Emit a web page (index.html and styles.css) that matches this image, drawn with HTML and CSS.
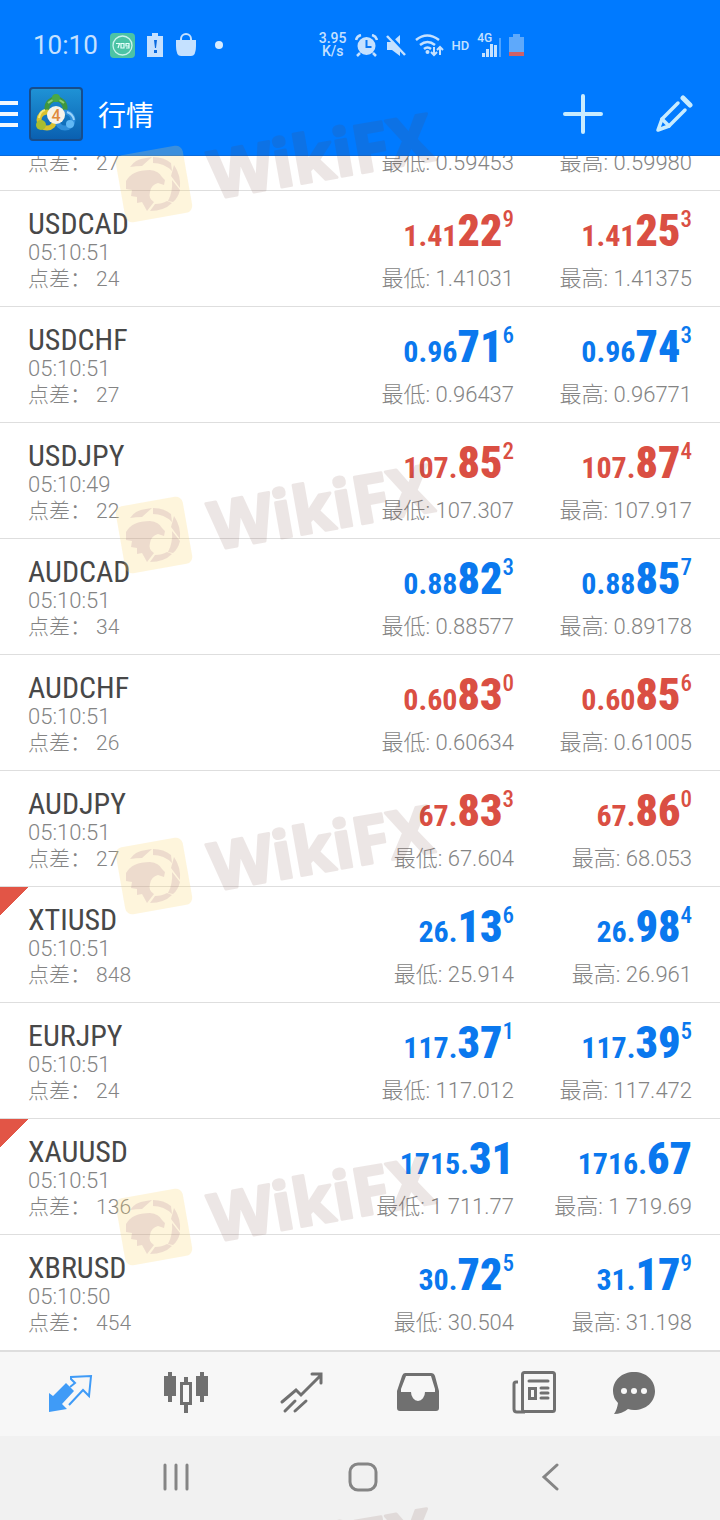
FILE: index.html
```html
<!DOCTYPE html>
<html lang="zh-CN">
<head>
    <meta charset="UTF-8">
    <meta name="viewport" content="width=device-width, initial-scale=1.0">
    <title>行情</title>
    <link rel="stylesheet" href="styles.css">
</head>
<body>
    <header>
        <div class="status-bar">
            <div class="status-group">
                <span class="clock">10:10</span>
                <svg width="25" height="25" viewBox="0 0 25 25">
                    <rect width="25" height="25" rx="4" fill="#4cc3a5"/>
                    <circle cx="12.500" cy="12.500" r="9.500" fill="none" stroke="#c9f3ee" stroke-width="1.300"/>
                    <path d="M6 10.500h3.500l-1.500 4.500M11 10.500h3v4.500h-3zM16 15h3v-4.500h-3v2.500h3" fill="none" stroke="#e6fffb" stroke-width="1.200"/>
                </svg>
                <svg width="16" height="24" viewBox="0 0 16 24">
                    <path d="M5 0h6v3h5v21H0V3h5z" fill="#c5e1ff"/>
                    <path d="M7 7h3l-1 8H8zM7 17h3v3H7z" fill="#0a6be0"/>
                </svg>
                <svg width="22" height="24" viewBox="0 0 22 24">
                    <path d="M6 9V6a5 5 0 0 1 10 0v3" fill="none" stroke="#c5e1ff" stroke-width="2"/>
                    <path d="M1 7h20v6q0 10-5 10H6q-5 0-5-10z" fill="#c5e1ff"/>
                </svg>
                <span class="dot"></span>
            </div>
            <div class="status-group status-right">
                <span class="speed"><span>3.95</span><span>K/s</span></span>
                <svg width="23" height="23" viewBox="0 0 23 23" fill="none" stroke="#c5e1ff">
                    <circle cx="11.500" cy="12" r="9" fill="#c5e1ff" stroke="none"/>
                    <path d="M11.500 6v7h5" stroke="#0a78f5" stroke-width="2"/>
                    <path d="M1 6q1-4 5-5M22 6q-1-4-5-5M5 19l-3 3M18 19l3 3" stroke-width="2.500"/>
                </svg>
                <svg width="21" height="23" viewBox="0 0 21 23">
                    <path d="M1 8h5l8-7v21l-8-6H1z" fill="#c5e1ff"/>
                    <path d="M2 0l19 20" stroke="#007aff" stroke-width="3"/>
                    <path d="M1 2l18 19" stroke="#c5e1ff" stroke-width="2.500"/>
                </svg>
                <svg width="29" height="23" viewBox="0 0 29 23" fill="none" stroke="#c5e1ff" stroke-width="2.500">
                    <path d="M1 6q11-9 23 0M5 11q7.500-6 15 0M9 15q3.500-3 7 0"/>
                    <circle cx="12.500" cy="18" r="2" fill="#c5e1ff" stroke="none"/>
                    <path d="M19 13v7M16 18l3 3 3-3M25 21v-7M22 16l3-3 3 3" stroke-width="2"/>
                </svg>
                <span class="hd">HD</span>
                <span class="signal">
                    <span class="net">4G</span>
                    <svg width="19" height="19" viewBox="0 0 19 19" fill="#c5e1ff">
                        <path d="M0 15h3v4H0zM4 11h3v8H4zM8 6h3v13H8zM12 7h3v12h-3z"/>
                        <path d="M17 0h2v19h-2z" opacity=".4"/>
                    </svg>
                </span>
                <svg width="15" height="22" viewBox="0 0 15 22">
                    <path d="M4 0h7v3h4v16H0V3h4z" fill="#5ea9fb"/>
                    <path d="M0 18h15v4H0z" fill="#cf6168"/>
                </svg>
            </div>
        </div>
        <div class="toolbar">
            <button class="icon-btn" aria-label="菜单">
                <svg width="18" height="26" viewBox="0 0 18 26" fill="#f0f8ff"><path d="M0 0h18v4H0zM0 11h18v4H0zM0 22h18v4H0z"/></svg>
            </button>
            <svg class="app-icon" width="54" height="54" viewBox="0 0 54 54">
                <defs>
                    <linearGradient id="tile" x1="0" y1="0" x2="0" y2="1"><stop offset="0" stop-color="#1f93d6"/><stop offset="1" stop-color="#0a5fb0"/></linearGradient>
                </defs>
                <rect x="1" y="1" width="52" height="52" rx="3" fill="url(#tile)" stroke="#174d8c" stroke-width="2"/>
                <g fill="none" stroke-width="5">
                    <circle cx="27" cy="21" r="9" stroke="#3e9640"/>
                    <circle cx="18" cy="33" r="8" stroke="#d8c12e"/>
                    <circle cx="36" cy="33" r="8" stroke="#2f8edb"/>
                </g>
                <path d="M19 16q8-7 16 0" fill="none" stroke="#8bcf72" stroke-width="2"/>
                <path d="M10 31q1-7 6-8" fill="none" stroke="#f6e878" stroke-width="2"/>
                <path d="M38 25q6 2 7 8" fill="none" stroke="#9ad4fa" stroke-width="2"/>
                <circle cx="27" cy="11" r="4" fill="#49a845"/>
                <circle cx="12" cy="38" r="5" fill="#a8bd30"/>
                <circle cx="41" cy="37" r="4" fill="#61b8f5"/>
                <circle cx="27" cy="28" r="9" fill="#f7f3ea"/>
                <text x="27" y="34" class="app-digit">4</text>
            </svg>
            <h1>行情</h1>
            <button class="icon-btn" aria-label="添加">
                <svg width="40" height="40" viewBox="0 0 40 40"><path d="M20 2v36M2 20h36" stroke="#c8ecff" stroke-width="4" stroke-linecap="round"/></svg>
            </button>
            <button class="icon-btn" aria-label="编辑">
                <svg width="38" height="38" viewBox="0 0 38 38" fill="none" stroke="#c8ecff" stroke-width="3.500" stroke-linecap="round" stroke-linejoin="round">
                    <path d="M23 8L7 24L3 35L14 31L30 15"/>
                    <path d="M7 24l7 7"/>
                    <path d="M28 3l7 7" stroke-width="5"/>
                </svg>
            </button>
        </div>
    </header>

    <main>
        <section class="quote">
            <div class="info"><p class="spread">点差： 27</p></div>
            <div class="side"><p>最低: 0.59453</p></div>
            <div class="side"><p>最高: 0.59980</p></div>
        </section>
        <section class="quote down">
            <div class="info"><h2>USDCAD</h2><p>05:10:51</p><p class="spread">点差： 24</p></div>
            <div class="side"><div class="price">1.41<b>22</b><sup>9</sup></div><p>最低: 1.41031</p></div>
            <div class="side"><div class="price">1.41<b>25</b><sup>3</sup></div><p>最高: 1.41375</p></div>
        </section>
        <section class="quote up">
            <div class="info"><h2>USDCHF</h2><p>05:10:51</p><p class="spread">点差： 27</p></div>
            <div class="side"><div class="price">0.96<b>71</b><sup>6</sup></div><p>最低: 0.96437</p></div>
            <div class="side"><div class="price">0.96<b>74</b><sup>3</sup></div><p>最高: 0.96771</p></div>
        </section>
        <section class="quote down">
            <div class="info"><h2>USDJPY</h2><p>05:10:49</p><p class="spread">点差： 22</p></div>
            <div class="side"><div class="price">107.<b>85</b><sup>2</sup></div><p>最低: 107.307</p></div>
            <div class="side"><div class="price">107.<b>87</b><sup>4</sup></div><p>最高: 107.917</p></div>
        </section>
        <section class="quote up">
            <div class="info"><h2>AUDCAD</h2><p>05:10:51</p><p class="spread">点差： 34</p></div>
            <div class="side"><div class="price">0.88<b>82</b><sup>3</sup></div><p>最低: 0.88577</p></div>
            <div class="side"><div class="price">0.88<b>85</b><sup>7</sup></div><p>最高: 0.89178</p></div>
        </section>
        <section class="quote down">
            <div class="info"><h2>AUDCHF</h2><p>05:10:51</p><p class="spread">点差： 26</p></div>
            <div class="side"><div class="price">0.60<b>83</b><sup>0</sup></div><p>最低: 0.60634</p></div>
            <div class="side"><div class="price">0.60<b>85</b><sup>6</sup></div><p>最高: 0.61005</p></div>
        </section>
        <section class="quote down">
            <div class="info"><h2>AUDJPY</h2><p>05:10:51</p><p class="spread">点差： 27</p></div>
            <div class="side"><div class="price">67.<b>83</b><sup>3</sup></div><p>最低: 67.604</p></div>
            <div class="side"><div class="price">67.<b>86</b><sup>0</sup></div><p>最高: 68.053</p></div>
        </section>
        <section class="quote up flagged">
            <div class="info"><h2>XTIUSD</h2><p>05:10:51</p><p class="spread">点差： 848</p></div>
            <div class="side"><div class="price">26.<b>13</b><sup>6</sup></div><p>最低: 25.914</p></div>
            <div class="side"><div class="price">26.<b>98</b><sup>4</sup></div><p>最高: 26.961</p></div>
        </section>
        <section class="quote up">
            <div class="info"><h2>EURJPY</h2><p>05:10:51</p><p class="spread">点差： 24</p></div>
            <div class="side"><div class="price">117.<b>37</b><sup>1</sup></div><p>最低: 117.012</p></div>
            <div class="side"><div class="price">117.<b>39</b><sup>5</sup></div><p>最高: 117.472</p></div>
        </section>
        <section class="quote up flagged">
            <div class="info"><h2>XAUUSD</h2><p>05:10:51</p><p class="spread">点差： 136</p></div>
            <div class="side"><div class="price">1715.<b>31</b></div><p>最低: 1 711.77</p></div>
            <div class="side"><div class="price">1716.<b>67</b></div><p>最高: 1 719.69</p></div>
        </section>
        <section class="quote up">
            <div class="info"><h2>XBRUSD</h2><p>05:10:50</p><p class="spread">点差： 454</p></div>
            <div class="side"><div class="price">30.<b>72</b><sup>5</sup></div><p>最低: 30.504</p></div>
            <div class="side"><div class="price">31.<b>17</b><sup>9</sup></div><p>最高: 31.198</p></div>
        </section>
    </main>

    <nav class="tabs">
        <a href="#quotes" class="active" aria-label="行情">
            <svg width="48" height="48" viewBox="0 0 48 48">
                <path d="M3 24l4 3 13-13 8 8-12 13 5 5-18 3z" fill="currentColor"/>
                <path d="M24 18l5-4-4-4v-2l20-1-2 20-6-6-14 15" fill="none" stroke="currentColor" stroke-width="2"/>
            </svg>
        </a>
        <a href="#charts" aria-label="图表">
            <svg width="48" height="48" viewBox="0 0 48 48">
                <path d="M2 7h4V3h4v4h4v20h-4v6H6v-6H2zM34 7h4V3h4v4h4v20h-4v6h-4v-6h-4z" fill="currentColor"/>
                <path d="M24 8v6M24 35v9" stroke="currentColor" stroke-width="4"/>
                <rect x="19.500" y="14.500" width="9" height="20" fill="none" stroke="currentColor" stroke-width="3"/>
            </svg>
        </a>
        <a href="#trade" aria-label="交易">
            <svg width="48" height="48" viewBox="0 0 48 48" fill="none" stroke="currentColor" stroke-width="3" stroke-linecap="round">
                <path d="M4 33l14-12 5 5L43 6M34 5h9v9M7 42l10-10M17 42l11-10"/>
            </svg>
        </a>
        <a href="#history" aria-label="历史">
            <svg width="48" height="48" viewBox="0 0 48 48">
                <path d="M11 4h26q3 0 4 3l4 15v17q0 3-3 3H6q-3 0-3-3V22L8 7q1-3 3-3zM12 7L7 20v3h10a7 9 0 0 0 14 0h10v-3L37 7z" fill="currentColor" fill-rule="evenodd"/>
            </svg>
        </a>
        <a href="#news" aria-label="新闻">
            <svg width="48" height="48" viewBox="0 0 48 48" fill="none" stroke="currentColor" stroke-width="3">
                <rect x="12.500" y="3.500" width="32" height="39" rx="2"/>
                <path d="M8 13H6q-2 0-2 2v25q0 3 3 3h8"/>
                <path d="M19 12h19M31 19h7M31 24h7M31 29h7" stroke-linecap="round"/>
                <rect x="19.500" y="19.500" width="6" height="10"/>
            </svg>
        </a>
        <a href="#messages" aria-label="消息">
            <svg width="48" height="48" viewBox="0 0 48 48">
                <path d="M24 3C12 3 3 11 3 22q0 7 5 12-1 7-4 11 8 0 14-5 3 1 6 1c12 0 21-8 21-19S36 3 24 3z" fill="currentColor"/>
                <g fill="#f7f7f7"><circle cx="14" cy="22" r="3"/><circle cx="24" cy="22" r="3"/><circle cx="34" cy="22" r="3"/></g>
            </svg>
        </a>
    </nav>

    <div class="system-nav">
        <button class="icon-btn" aria-label="最近">
            <svg width="28" height="28" viewBox="0 0 28 28"><path d="M3 2v24M14 2v24M25 2v24" stroke="#858585" stroke-width="3" stroke-linecap="round"/></svg>
        </button>
        <button class="icon-btn" aria-label="主页">
            <svg width="30" height="30" viewBox="0 0 30 30"><rect x="2" y="2" width="26" height="26" rx="8" fill="none" stroke="#858585" stroke-width="3"/></svg>
        </button>
        <button class="icon-btn" aria-label="返回">
            <svg width="28" height="28" viewBox="0 0 28 28"><path d="M20 2L7 14l13 12" fill="none" stroke="#858585" stroke-width="3" stroke-linecap="round"/></svg>
        </button>
    </div>

    <div class="watermarks" aria-hidden="true">
        <svg class="mark mark-1" width="360" height="140" viewBox="0 0 360 140">
            <g id="wm">
                <g transform="translate(54 84)">
                    <rect class="mark-tile" x="-34" y="-34" width="68" height="68" rx="7" transform="rotate(-10)"/>
                    <g class="mark-bird">
                        <path d="M-24-17Q-19-25-8-26L-2-27L-12-18Q-18-18-24-17zM-1-27Q10-27 17-21L18-13Q10-21-1-21zM20-19Q27-9 26 4L17-8zM26 6Q24 14 19 18L14 17Q19 8 18-4zM18 19Q10 27-4 27L1 20Q8 20 13 17z"/>
                        <path d="M-28-3Q-22-14-4-14Q5-13 8-7L11-4L10 1L4-1Q-3 1-4 8Q-6 14 0 18L-7 27L-12 18L-17 19L-17 13L-23 12L-22 6L-28 5z"/>
                    </g>
                </g>
                <text class="mark-text" transform="translate(114 99) rotate(-10)">WikiFX</text>
            </g>
        </svg>
        <svg class="mark mark-2" width="360" height="140" viewBox="0 0 360 140"><use href="#wm"/></svg>
        <svg class="mark mark-3" width="360" height="140" viewBox="0 0 360 140"><use href="#wm"/></svg>
        <svg class="mark mark-4" width="360" height="140" viewBox="0 0 360 140"><use href="#wm"/></svg>
        <svg class="mark mark-5" width="360" height="140" viewBox="0 0 360 140"><use href="#wm"/></svg>
    </div>
</body>
</html>
```

FILE: styles.css
```css
:root {
    --primary-color: #007aff;
    --up-color: #0a78ee;
    --down-color: #da4f43;
    --text-color: #484848;
    --muted-color: #848484;
    --line-color: #dedede;
}
* {
    box-sizing: border-box;
}
body {
    position: relative;
    display: flex;
    flex-direction: column;
    height: 100vh;
    margin: 0;
    overflow: hidden;
    background-color: #fff;
    color: var(--text-color);
    font-family: Roboto, "Noto Sans CJK SC", sans-serif;
}
svg {
    display: block;
    flex: none;
}
h1, h2, p {
    margin: 0;
    font-weight: 400;
}
header {
    flex: none;
    background-color: var(--primary-color);
    color: #c5e1ff;
}
.status-bar {
    display: flex;
    align-items: center;
    height: 72px;
    padding: 18px 0 0 33px;
}
.status-group {
    display: flex;
    align-items: center;
    gap: 12px;
}
.status-right {
    gap: 8px;
    margin-left: 96px;
}
.clock {
    font-size: 26px;
}
.dot {
    width: 8px;
    height: 8px;
    margin-left: 6px;
    border-radius: 50%;
    background-color: #d8ecff;
}
.speed {
    display: flex;
    flex-direction: column;
    font-size: 14px;
    font-weight: 500;
    line-height: 13px;
    text-align: center;
}
.hd {
    font-size: 13px;
    font-weight: 500;
}
.signal {
    position: relative;
    padding: 4px 0 0 5px;
}
.net {
    position: absolute;
    top: -2px;
    left: 0;
    font-size: 12px;
    font-weight: 500;
    line-height: 12px;
}
.toolbar {
    display: flex;
    align-items: center;
    height: 84px;
    padding-right: 27px;
    border-bottom: 1px solid #0a6bdb;
}
.icon-btn {
    display: flex;
    padding: 0;
    border: none;
    background: none;
    cursor: pointer;
}
.app-icon {
    margin: 0 15px 0 11px;
}
.app-digit {
    font-size: 16px;
    font-weight: 500;
    fill: #e08a3c;
    text-anchor: middle;
}
.toolbar h1 {
    flex: 1;
    color: #fff;
    font-size: 28px;
}
.toolbar h1 + .icon-btn {
    margin-right: 52px;
}
main {
    display: flex;
    flex: 1;
    flex-direction: column;
    justify-content: flex-end;
    min-height: 0;
    overflow: hidden;
}
.quote {
    display: grid;
    flex: none;
    grid-template-columns: 1fr 178px 178px;
    padding: 17px 28px 14px;
    border-bottom: 1px solid var(--line-color);
}
.quote h2 {
    font-family: "Roboto Condensed", "Liberation Sans Narrow", Roboto, sans-serif;
    font-size: 30px;
    line-height: 32px;
}
.quote p {
    color: var(--muted-color);
    font-size: 22px;
    font-weight: 300;
    line-height: 26px;
}
.quote .spread {
    font-size: 21px;
}
.side {
    text-align: right;
}
.price {
    height: 58px;
    font-family: "Roboto Condensed", "Liberation Sans Narrow", Roboto, sans-serif;
    font-size: 30px;
    font-weight: 700;
    line-height: 46px;
}
.price b {
    font-size: 44px;
}
.price sup {
    font-size: 23px;
    font-weight: 500;
    line-height: 0;
    vertical-align: 19px;
}
.up .price {
    color: var(--up-color);
}
.down .price {
    color: var(--down-color);
}
.flagged {
    background: linear-gradient(135deg, #e25546 20px, transparent 20px);
}
.tabs {
    display: grid;
    flex: none;
    grid-template-columns: repeat(5, 116fr) 83fr;
    align-items: center;
    justify-items: center;
    height: 85px;
    padding: 0 45px 2px 12px;
    border-top: 1px solid var(--line-color);
    background-color: #f7f7f7;
}
.tabs a {
    color: #707070;
}
.tabs .active {
    color: #3f9bf7;
}
.system-nav {
    display: grid;
    flex: none;
    grid-template-columns: repeat(3, 1fr);
    align-items: center;
    justify-items: center;
    height: 84px;
    padding: 0 75px 2px 82px;
    background-color: #f1f1f1;
}
.watermarks {
    position: absolute;
    inset: 0;
    overflow: hidden;
    pointer-events: none;
}
.mark {
    position: absolute;
    left: 100px;
}
.mark-1 { top: 100px; }
.mark-2 { top: 451px; }
.mark-3 { top: 792px; }
.mark-4 { top: 1143px; }
.mark-5 { top: 1495px; }
.mark-tile {
    fill: rgba(250, 215, 110, 0.24);
}
.mark-bird {
    fill: rgba(150, 90, 130, 0.16);
}
.mark-text {
    fill: #6e3c32;
    stroke: #6e3c32;
    stroke-width: 3px;
    stroke-linejoin: round;
    opacity: 0.12;
    font-family: "Open Sans", sans-serif;
    font-size: 66px;
    font-weight: 700;
}
```
